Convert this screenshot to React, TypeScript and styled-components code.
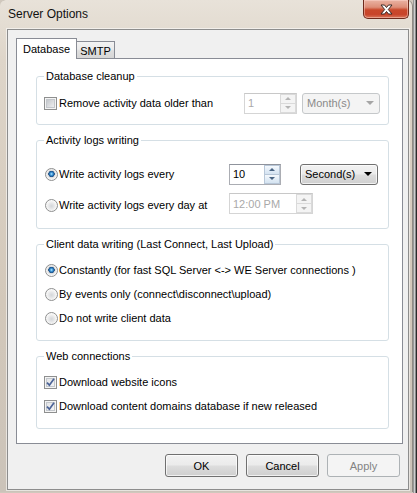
import React from 'react'
import styled, { createGlobalStyle } from 'styled-components'

const GlobalStyle = createGlobalStyle`
  html, body {
    margin: 0;
    padding: 0;
  }
  body {
    font-family: 'Liberation Sans', Arial, sans-serif;
    color: #000;
  }
`

const Desktop = styled.div`
  width: 417px;
  height: 493px;
  overflow: hidden;
  background: linear-gradient(90deg, #d0c8bd 0, #d0c8bd 413px, #7d7d7d 413px, #e9e9e9 415px, #2b2b2b 416px);
`

const Window = styled.div`
  width: 413px;
  height: 492px;
  box-sizing: border-box;
  padding: 0 4px 2px 7px;
  display: flex;
  flex-direction: column;
  border-radius: 6px 6px 0 0;
  background: linear-gradient(180deg, #e8e2d9 0, #ded5c9 60px, #d3c8ba 300px, #cbc3b9 100%);
  box-shadow: inset -1px 0 0 #8f8a84;
`

const TitleBar = styled.div`
  height: 29px;
  display: flex;
  justify-content: space-between;
  margin-left: -7px;
`

const Title = styled.div`
  padding: 7px 0 0 8px;
  font-size: 12px;
  line-height: 15px;
  color: #111;
`

const CloseButton = styled.div`
  width: 46px;
  height: 19px;
  box-sizing: border-box;
  display: flex;
  align-items: center;
  justify-content: center;
  border: 1px solid #6e2a1c;
  border-top: none;
  border-radius: 0 0 5px 5px;
  background: linear-gradient(180deg, #eab3a3 0, #dd8e78 40%, #c9482b 55%, #c8442a 80%, #d9765a 100%);
  box-shadow: inset 0 0 0 1px rgba(255, 220, 210, 0.45);
`

const Client = styled.div`
  flex: 1;
  display: flex;
  flex-direction: column;
  background: #f0f0f0;
  border: 1px solid #8d8d8d;
  box-shadow: 0 0 0 1px rgba(255, 255, 255, 0.55);
  padding: 8px 5px 0 8px;
`

const TabStrip = styled.div`
  height: 20px;
  display: flex;
  align-items: flex-end;
`

const Tab = styled.div<{ $active?: boolean; $w: number }>`
  position: relative;
  z-index: ${({ $active }) => ($active ? 2 : 1)};
  width: ${({ $w }) => $w}px;
  height: ${({ $active }) => ($active ? 21 : 17)}px;
  margin-bottom: ${({ $active }) => ($active ? -1 : 0)}px;
  margin-left: ${({ $active }) => ($active ? 0 : -1)}px;
  box-sizing: border-box;
  border: 1px solid #898c95;
  border-bottom: none;
  display: flex;
  align-items: center;
  justify-content: center;
  padding-top: ${({ $active }) => ($active ? 0 : 1)}px;
  font-size: 11px;
  background: ${({ $active }) =>
    $active ? '#fff' : 'linear-gradient(180deg, #f3f3f3 0, #ebebeb 45%, #dedede 55%, #d6d6d6 100%)'};
`

const Panel = styled.div`
  height: 386px;
  box-sizing: border-box;
  background: #fff;
  border: 1px solid #898c95;
  padding: 10px 13px 0 19px;
  display: flex;
  flex-direction: column;
  gap: 8px;
`

const Group = styled.fieldset<{ $pt: number; $pb: number }>`
  margin: 0;
  min-width: 0;
  padding: ${({ $pt }) => $pt}px 8px ${({ $pb }) => $pb}px 7px;
  border: 1px solid #d5dfe5;
  border-radius: 3px;
  display: flex;
  flex-direction: column;
`

const Legend = styled.legend`
  padding: 0 2px;
  font-size: 11px;
  line-height: 14px;
`

const Row = styled.div<{ $h: number; $mt?: number }>`
  display: flex;
  align-items: center;
  height: ${({ $h }) => $h}px;
  margin-top: ${({ $mt }) => $mt ?? 0}px;
`

const Option = styled.label<{ $w?: number }>`
  display: flex;
  align-items: center;
  gap: 2px;
  flex: none;
  width: ${({ $w }) => ($w ? `${$w}px` : 'auto')};
  font-size: 11px;
  line-height: 14px;
  white-space: nowrap;
`

const CheckBox = styled.span<{ $checked?: boolean }>`
  width: 13px;
  height: 13px;
  flex: none;
  box-sizing: border-box;
  display: flex;
  align-items: center;
  justify-content: center;
  border: 1px solid #8e8f8f;
  background: ${({ $checked }) =>
    $checked
      ? 'linear-gradient(135deg, #dfe1e4 0, #f7f7f7 100%)'
      : 'linear-gradient(135deg, #b9bdc2 0, #e6e7e9 70%, #f4f4f4 100%)'};
  box-shadow: inset 0 0 0 1px #f4f4f4, inset 0 0 0 2px #c3c7cc;
`

const Radio = styled.span<{ $checked?: boolean }>`
  width: 13px;
  height: 13px;
  flex: none;
  box-sizing: border-box;
  border-radius: 50%;
  border: 1px solid #8e8f8f;
  margin-left: 1px;
  margin-right: -1px;
  background: ${({ $checked }) =>
    $checked
      ? 'radial-gradient(circle at 50% 45%, #bfe8ff 0, #4aa3e0 1.2px, #1f62a3 2.4px, #24507f 3px, #d6d6d6 3.4px, #e9e9e9 4.2px, #fbfbfb 6px)'
      : 'radial-gradient(circle at 50% 55%, #d3d6d9 0, #e4e5e7 2.5px, #f0f0f0 4px, #fcfcfc 6px)'};
`

const Spin = styled.div<{ $w: number; $disabled?: boolean; $mt?: number }>`
  width: ${({ $w }) => $w}px;
  height: 21px;
  margin-top: ${({ $mt }) => $mt ?? 0}px;
  box-sizing: border-box;
  display: flex;
  background: #fff;
  border: 1px solid ${({ $disabled }) => ($disabled ? '#d5d5d5' : '#abadb3')};
  border-top-color: ${({ $disabled }) => ($disabled ? '#c8c8c8' : '#8f939c')};
`

const SpinValue = styled.span<{ $disabled?: boolean }>`
  flex: 1;
  display: flex;
  align-items: center;
  padding-left: 3px;
  font-size: 11px;
  color: ${({ $disabled }) => ($disabled ? '#a9a9a9' : '#000')};
`

const SpinButtons = styled.div`
  width: 16px;
  display: flex;
  flex-direction: column;
`

const SpinArrow = styled.span<{ $disabled?: boolean; $down?: boolean }>`
  flex: 1;
  display: flex;
  align-items: center;
  justify-content: center;
  box-sizing: border-box;
  border: 1px solid ${({ $disabled }) => ($disabled ? '#dadada' : '#b8c7d8')};
  margin-top: ${({ $down }) => ($down ? -1 : 0)}px;
  background: ${({ $disabled }) =>
    $disabled ? '#f4f4f4' : 'linear-gradient(180deg, #f5f9fd 0, #e3edf7 50%, #d4e3f1 100%)'};

  &::before {
    content: '';
    width: 0;
    height: 0;
    border-left: 3px solid transparent;
    border-right: 3px solid transparent;
    ${({ $down, $disabled }) =>
      $down
        ? `border-top: 3px solid ${$disabled ? '#b4b4b4' : '#4a6584'};`
        : `border-bottom: 3px solid ${$disabled ? '#b4b4b4' : '#4a6584'};`}
  }
`

const Combo = styled.div<{ $disabled?: boolean; $ml: number }>`
  width: 78px;
  height: 21px;
  margin-left: ${({ $ml }) => $ml}px;
  box-sizing: border-box;
  display: flex;
  align-items: center;
  justify-content: space-between;
  padding: 0 5px 0 4px;
  border: 1px solid ${({ $disabled }) => ($disabled ? '#c5c8ca' : '#707070')};
  border-radius: 3px;
  font-size: 11px;
  color: ${({ $disabled }) => ($disabled ? '#8a8a8a' : '#000')};
  background: ${({ $disabled }) =>
    $disabled ? '#f4f4f4' : 'linear-gradient(180deg, #f2f2f2 0, #ebebeb 48%, #dddddd 52%, #cfcfcf 100%)'};
  box-shadow: ${({ $disabled }) => ($disabled ? 'none' : 'inset 0 0 0 1px rgba(255,255,255,0.7)')};

  &::after {
    content: '';
    width: 0;
    height: 0;
    border-left: 4px solid transparent;
    border-right: 4px solid transparent;
    border-top: 4px solid ${({ $disabled }) => ($disabled ? '#a5a5a5' : '#000')};
  }
`

const ButtonRow = styled.div`
  display: flex;
  justify-content: flex-end;
  gap: 8px;
  margin-top: 10px;
  padding-right: 3px;
`

const Button = styled.button<{ $disabled?: boolean }>`
  width: 73px;
  height: 23px;
  box-sizing: border-box;
  padding: 0;
  border: 1px solid ${({ $disabled }) => ($disabled ? '#adb2b5' : '#707070')};
  border-radius: 3px;
  font-family: 'Liberation Sans', Arial, sans-serif;
  font-size: 11px;
  color: ${({ $disabled }) => ($disabled ? '#838383' : '#000')};
  background: ${({ $disabled }) =>
    $disabled ? '#f4f4f4' : 'linear-gradient(180deg, #f2f2f2 0, #ebebeb 48%, #dddddd 52%, #cfcfcf 100%)'};
  box-shadow: ${({ $disabled }) => ($disabled ? 'none' : 'inset 0 0 0 1px rgba(255,255,255,0.7)')};
`

const CloseGlyph = () => (
  <svg width="13" height="11" viewBox="0 0 13 11">
    <path
      d="M1 1 H4.5 L6.5 3.5 L8.5 1 H12 L8.3 5.5 L12 10 H8.5 L6.5 7.5 L4.5 10 H1 L4.7 5.5 Z"
      fill="#fff"
      stroke="#3b2a26"
      strokeWidth="1"
      strokeLinejoin="round"
    />
  </svg>
)

const Tick = () => (
  <svg width="9" height="9" viewBox="0 0 9 9">
    <path d="M1 4.6 L3.4 7.2 L8 0.8" fill="none" stroke="#4b6397" strokeWidth="1.7" />
  </svg>
)

const SpinBox: React.FC<{ value: string; width: number; disabled?: boolean; mt?: number }> = ({
  value,
  width,
  disabled,
  mt,
}) => (
  <Spin $w={width} $disabled={disabled} $mt={mt}>
    <SpinValue $disabled={disabled}>{value}</SpinValue>
    <SpinButtons>
      <SpinArrow $disabled={disabled} />
      <SpinArrow $disabled={disabled} $down />
    </SpinButtons>
  </Spin>
)

export default function App() {
  return (
    <>
      <GlobalStyle />
      <Desktop>
        <Window>
          <TitleBar>
            <Title>Server Options</Title>
            <CloseButton>
              <CloseGlyph />
            </CloseButton>
          </TitleBar>

          <Client>
            <TabStrip>
              <Tab $active $w={61}>Database</Tab>
              <Tab $w={39}>SMTP</Tab>
            </TabStrip>

            <Panel>
              <Group $pt={9} $pb={10}>
                <Legend>Database cleanup</Legend>
                <Row $h={22}>
                  <Option $w={200}>
                    <CheckBox />
                    Remove activity data older than
                  </Option>
                  <SpinBox value="1" width={53} disabled />
                  <Combo $disabled $ml={5}>Month(s)</Combo>
                </Row>
              </Group>

              <Group $pt={16} $pb={12}>
                <Legend>Activity logs writing</Legend>
                <Row $h={22}>
                  <Option $w={185}>
                    <Radio $checked />
                    Write activity logs every
                  </Option>
                  <SpinBox value="10" width={52} />
                  <Combo $ml={19}>Second(s)</Combo>
                </Row>
                <Row $h={22} $mt={9}>
                  <Option $w={185}>
                    <Radio />
                    Write activity logs every day at
                  </Option>
                  <SpinBox value="12:00 PM" width={84} disabled mt={-3} />
                </Row>
              </Group>

              <Group $pt={7} $pb={10}>
                <Legend>Client data writing (Last Connect, Last Upload)</Legend>
                <Row $h={24}>
                  <Option>
                    <Radio $checked />
                    Constantly (for fast SQL Server &lt;-&gt; WE Server connections )
                  </Option>
                </Row>
                <Row $h={24}>
                  <Option>
                    <Radio />
                    By events only (connect\disconnect\upload)
                  </Option>
                </Row>
                <Row $h={24}>
                  <Option>
                    <Radio />
                    Do not write client data
                  </Option>
                </Row>
              </Group>

              <Group $pt={7} $pb={10}>
                <Legend>Web connections</Legend>
                <Row $h={24}>
                  <Option>
                    <CheckBox $checked>
                      <Tick />
                    </CheckBox>
                    Download website icons
                  </Option>
                </Row>
                <Row $h={24}>
                  <Option>
                    <CheckBox $checked>
                      <Tick />
                    </CheckBox>
                    Download content domains database if new released
                  </Option>
                </Row>
              </Group>
            </Panel>

            <ButtonRow>
              <Button>OK</Button>
              <Button>Cancel</Button>
              <Button $disabled>Apply</Button>
            </ButtonRow>
          </Client>
        </Window>
      </Desktop>
    </>
  )
}
